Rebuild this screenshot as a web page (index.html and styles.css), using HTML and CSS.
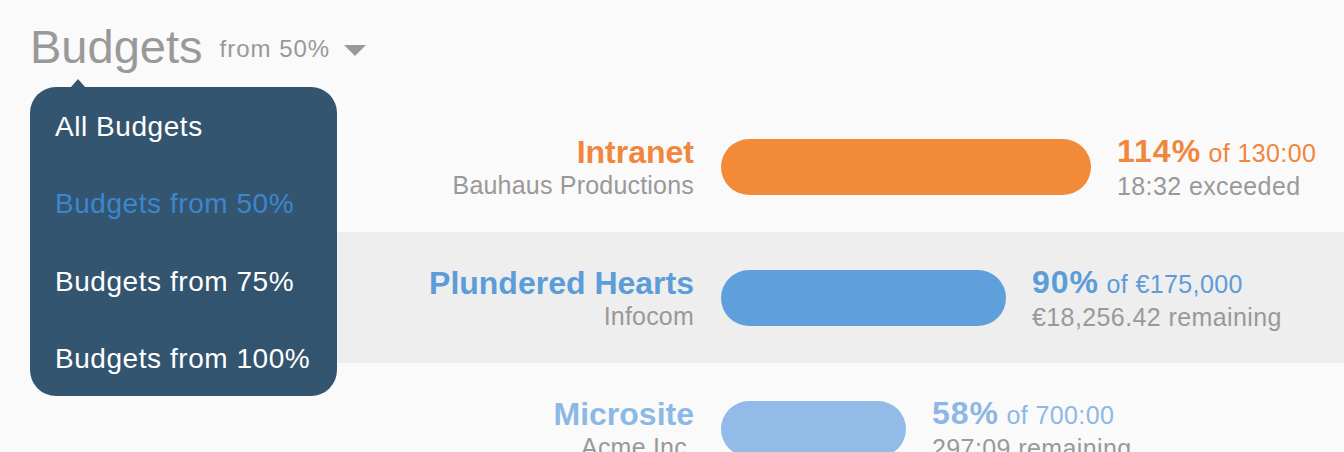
FILE: index.html
```html
<!DOCTYPE html>
<html lang="en">
<head>
    <meta charset="UTF-8">
    <meta name="viewport" content="width=device-width, initial-scale=1.0">
    <title>Budgets</title>
    <link rel="stylesheet" href="styles.css">
</head>
<body>
    <!-- Header with filter -->
    <header class="header">
        <h1 class="title">Budgets</h1>
        <div class="filter">
            <span>from 50%</span>
            <span class="caret"></span>
        </div>
    </header>

    <!-- Filter menu (open) -->
    <ul class="menu">
        <li>All Budgets</li>
        <li class="active">Budgets from 50%</li>
        <li>Budgets from 75%</li>
        <li>Budgets from 100%</li>
    </ul>

    <!-- Budget list -->
    <ul class="budgets">
        <li class="budget orange">
            <div class="project">
                <div class="name">Intranet</div>
                <div class="client">Bauhaus Productions</div>
            </div>
            <div class="bar" style="width: 370px"></div>
            <div class="stats">
                <div class="total"><strong>114%</strong> of 130:00</div>
                <div class="rest">18:32 exceeded</div>
            </div>
        </li>
        <li class="budget blue striped">
            <div class="project">
                <div class="name">Plundered Hearts</div>
                <div class="client">Infocom</div>
            </div>
            <div class="bar" style="width: 285px"></div>
            <div class="stats">
                <div class="total"><strong>90%</strong> of €175,000</div>
                <div class="rest">€18,256.42 remaining</div>
            </div>
        </li>
        <li class="budget light">
            <div class="project">
                <div class="name">Microsite</div>
                <div class="client">Acme Inc.</div>
            </div>
            <div class="bar" style="width: 185px"></div>
            <div class="stats">
                <div class="total"><strong>58%</strong> of 700:00</div>
                <div class="rest">297:09 remaining</div>
            </div>
        </li>
    </ul>
</body>
</html>
```

FILE: styles.css
```css
body {
    font-family: "Liberation Sans", Arial, sans-serif;
    background-color: #fafafa;
    color: #999;
    margin: 0;
    overflow: hidden;
}
ul {
    list-style-type: none;
    margin: 0;
    padding: 0;
}

/* Header */
.header {
    display: flex;
    align-items: center;
    padding: 20px 30px 0;
}
.title {
    font-size: 47px;
    font-weight: normal;
    line-height: 54px;
    margin: 0;
}
.filter {
    display: flex;
    align-items: center;
    font-size: 24px;
    letter-spacing: 1px;
    margin-left: 17px;
    padding-top: 4px;
}
.caret {
    width: 0;
    height: 0;
    margin-left: 14px;
    margin-top: 2px;
    border-left: 11px solid transparent;
    border-right: 11px solid transparent;
    border-top: 11px solid #999;
}

/* Menu */
.menu {
    position: absolute;
    left: 30px;
    top: 87px;
    width: 307px;
    background-color: rgba(30, 66, 96, 0.9);
    border-radius: 26px;
    z-index: 2;
}
.menu::before {
    content: "";
    position: absolute;
    left: 41px;
    top: -8px;
    border-left: 7px solid transparent;
    border-right: 7px solid transparent;
    border-bottom: 8px solid rgba(30, 66, 96, 0.9);
}
.menu li {
    color: white;
    font-size: 28px;
    letter-spacing: 0.55px;
    line-height: 77.3px;
    padding: 1px 0 0 25px;
    margin-bottom: -1px;
}
.menu li.active {
    color: #3b86cf;
}

/* Budgets */
.budgets {
    margin: 27px 0 0 180px;
}
.budget {
    display: flex;
    align-items: center;
    height: 131px;
}
.budget.striped {
    background-color: #eee;
    border-radius: 20px 0 0 20px;
}
.project {
    width: 514px;
    margin-right: 27px;
    text-align: right;
}
.name, .total {
    font-size: 25px;
    line-height: 36px;
}
.name, .total strong {
    font-size: 32px;
    font-weight: bold;
}
.client, .rest {
    font-size: 25px;
    line-height: 30px;
}
.client {
    letter-spacing: 0.2px;
}
.bar {
    height: 56px;
    border-radius: 28px;
    flex-shrink: 0;
}
.stats {
    margin-left: 26px;
    letter-spacing: 0.4px;
}
.total strong {
    letter-spacing: 1px;
}
.orange .name, .orange .total {
    color: #f0873a;
}
.orange .bar {
    background-color: #f28a37;
}
.blue .name, .blue .total {
    color: #5b9cd9;
}
.blue .bar {
    background-color: #5fa0dc;
}
.light .name, .light .total {
    color: #8db8e6;
}
.light .bar {
    background-color: #92bbe8;
}
```
